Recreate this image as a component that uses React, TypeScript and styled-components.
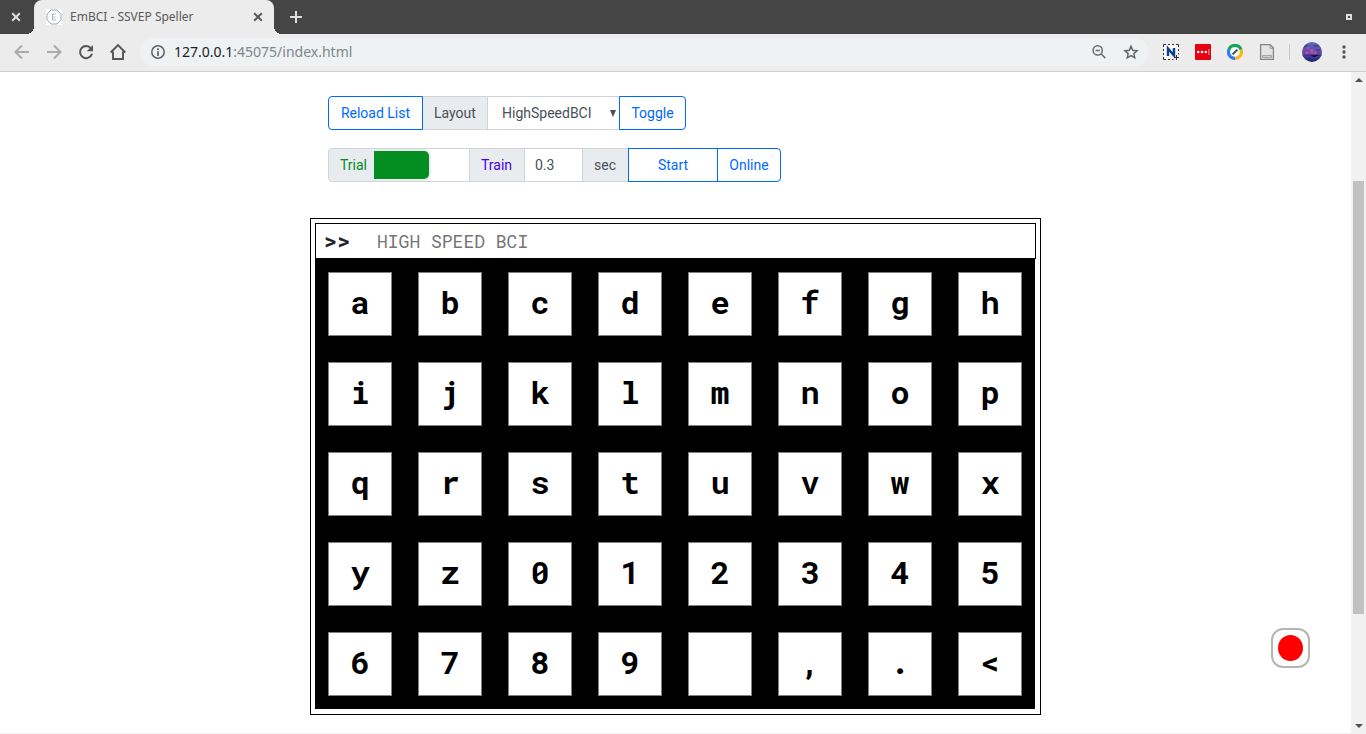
import React from "react";
import styled, { createGlobalStyle } from "styled-components";

const mono = `"Roboto Mono", "Liberation Mono", monospace`;

const GlobalStyle = createGlobalStyle`
  *, *::before, *::after { box-sizing: border-box; }
  html, body, #root { height: 100%; }
  body { margin: 0; background: #fff; font-family: Roboto, "Liberation Sans", sans-serif; font-size: 14px; color: #212529; }
  button, input, select { font: inherit; margin: 0; }
  svg { display: block; flex: none; }
`;

const Window = styled.div`
  display: flex;
  flex-direction: column;
  min-height: 100%;
`;

const TabStrip = styled.header`
  display: flex;
  height: 34px;
  background: #454545;
  font-family: "Noto Sans", sans-serif;
`;

const IconButton = styled.button<{ $w?: number }>`
  display: flex;
  align-items: center;
  justify-content: center;
  flex: none;
  width: ${(p) => p.$w ?? 32}px;
  padding: 0;
  border: 0;
  background: none;
`;

const Tab = styled.div`
  position: relative;
  display: flex;
  align-items: center;
  width: 240px;
  margin-left: 2px;
  padding-left: 12px;
  border-radius: 8px 8px 0 0;
  background: #ececec;
  color: #5a5a5a;
  font-size: 12px;

  &::before, &::after {
    content: "";
    position: absolute;
    bottom: 0;
    width: 8px;
    height: 8px;
  }
  &::before { left: -8px; background: radial-gradient(circle at 0 0, transparent 8px, #ececec 8px); }
  &::after { right: -8px; background: radial-gradient(circle at 100% 0, transparent 8px, #ececec 8px); }
`;

const TabTitle = styled.span`
  flex: 1;
  margin-left: 8px;
  padding-bottom: 2px;
  white-space: nowrap;
`;

const Spacer = styled.div`
  flex: 1;
`;

const Toolbar = styled.nav`
  display: flex;
  align-items: center;
  height: 38px;
  padding: 0 6px 1px;
  border-bottom: 1px solid #cfcfcf;
  background: #ececec;
`;

const AddressBar = styled.div`
  display: flex;
  flex: 1;
  align-items: center;
  height: 28px;
  margin: 0 6px;
  padding: 0 2px 0 10px;
  border-radius: 14px;
  background: #eef2f3;
  font: 14px "Noto Sans", sans-serif;
`;

const Address = styled.a`
  flex: 1;
  margin-left: 8px;
  padding-bottom: 2px;
  color: #80868b;
  text-decoration: none;
`;

const Host = styled.span`
  color: #202124;
`;

const Divider = styled.span`
  width: 1px;
  height: 16px;
  margin: 0 6px;
  background: #c8c8c8;
`;

const Body = styled.div`
  display: flex;
  flex: 1;
  border-bottom: 1px solid #f4f4f4;
`;

const Page = styled.main`
  display: flex;
  flex: 1;
  flex-direction: column;
  align-items: center;
  padding: 24px 16px 18px;
`;

const Content = styled.div`
  width: 100%;
  max-width: 731px;
`;

const Controls = styled.form`
  display: flex;
  flex-direction: column;
  gap: 18px;
  padding: 0 18px;
  margin-bottom: 36px;
`;

const Group = styled.div`
  display: flex;
  height: 34px;

  & > * + * { margin-left: -1px; }
  & > :first-child { border-radius: 4px 0 0 4px; }
  & > :last-child { border-radius: 0 4px 4px 0; }
`;

const OutlineButton = styled.button<{ $w: number }>`
  position: relative;
  width: ${(p) => p.$w}px;
  padding: 0;
  border: 1px solid #0069ff;
  background: #fff;
  color: #0069ff;
`;

const Addon = styled.label<{ $w: number; $color?: string }>`
  display: flex;
  align-items: center;
  width: ${(p) => p.$w}px;
  padding-left: 11px;
  border: 1px solid #ced4da;
  background: #e9ecef;
  color: ${(p) => p.$color ?? "#495057"};
`;

const LayoutSelect = styled.div`
  position: relative;
  display: flex;
  width: 133px;

  select {
    flex: 1;
    width: 100%;
    padding: 0 14px;
    appearance: none;
    border: 1px solid #ced4da;
    border-radius: 0;
    background: #fff;
    color: #495057;
  }
  svg {
    position: absolute;
    right: 4px;
    top: 14px;
    pointer-events: none;
  }
`;

const NumberInput = styled.input`
  width: 59px;
  padding: 0 10px;
  border: 1px solid #ced4da;
  border-radius: 0;
  background: #fff;
  color: #495057;
`;

const SwitchCell = styled.div`
  display: flex;
  align-items: center;
  width: 96px;
  border: 1px solid #ced4da;
  border-left: 0;

  input {
    width: 55px;
    height: 28px;
    appearance: none;
    border-radius: 0 5px 5px 0;
    background: #048d20;
    box-shadow: 0 0 0 2px #e9ecef;
  }
`;

const Speller = styled.section`
  padding: 4px 4px 5px;
  border: 1px solid #000;
`;

const Prompt = styled.label`
  display: flex;
  align-items: center;
  height: 36px;
  padding-left: 8px;
  border: 1px solid #000;
  font-family: ${mono};
`;

const PromptMark = styled.span`
  width: 53px;
  font-size: 22px;
  line-height: 32px;
  font-weight: 700;
`;

const PromptInput = styled.input`
  flex: 1;
  min-width: 0;
  padding: 0;
  border: 0;
  outline: 0;
  background: none;
  font-size: 18px;

  &::placeholder { color: #757575; opacity: 1; }
`;

const Keyboard = styled.div`
  display: grid;
  grid-template-columns: repeat(8, 64px);
  justify-content: space-between;
  gap: 26px 0;
  margin-right: 1px;
  padding: 13px;
  background: #000;
`;

const Key = styled.button`
  height: 64px;
  padding: 0 0 4px;
  border: 1px solid #808080;
  background: #fff;
  color: #000;
  font-family: ${mono};
  font-size: 32px;
  font-weight: 700;
  line-height: 40px;
`;

const RecordButton = styled.button`
  position: fixed;
  right: 56px;
  bottom: 66px;
  display: flex;
  align-items: center;
  justify-content: center;
  width: 39px;
  height: 40px;
  padding: 0;
  border: 2px solid #b5b5b5;
  border-radius: 12px;
  background: #fff;

  &::before {
    content: "";
    width: 25px;
    height: 26px;
    border-radius: 50%;
    background: #f00;
  }
`;

const ScrollBar = styled.div`
  display: flex;
  flex-direction: column;
  align-items: center;
  width: 15px;
  padding: 6px 0 5px;
  background: #f1f1f1;
`;

const ScrollTrack = styled.div`
  display: flex;
  flex: 1;
  flex-direction: column;
  width: 11px;
`;

const TrackPart = styled.div<{ $grow: number; $thumb?: boolean }>`
  flex: ${(p) => p.$grow} 0 0;
  background: ${(p) => (p.$thumb ? "#c1c1c1" : "transparent")};
`;

const dark = "#555";

const Cross = ({ color }: { color: string }) => (
  <svg width="10" height="10" viewBox="0 0 10 10" stroke={color} strokeWidth="2">
    <path d="M1.2 1.2 8.8 8.8M8.8 1.2 1.2 8.8" />
  </svg>
);

const Favicon = () => (
  <svg width="16" height="16" viewBox="0 0 16 16" fill="none">
    <path d="M0 0h16v16H0z" fill="#fff" />
    <path d="M5 1h6l4 4.200v5.600L11 15H5l-4-4.200V5.200z" stroke="#94a5b8" />
    <path d="M10 5H6.500v6H10M6.500 8h3" stroke="#a9b6c6" />
  </svg>
);

const Arrow = ({ flip }: { flip?: boolean }) => (
  <svg width="16" height="16" viewBox="0 0 16 16" fill="none" stroke="#aaa" strokeWidth="2">
    <path d={flip ? "M1 8h13M8 1.500 14.500 8 8 14.500" : "M15 8H2M8 1.500 1.500 8 8 14.500"} />
  </svg>
);

const Reload = () => (
  <svg width="16" height="16" viewBox="0 0 16 16" fill="none">
    <path d="M13 4.300A6.100 6.100 0 1 0 14 9.800" stroke={dark} strokeWidth="2" />
    <path d="M15 1v6.200H8.800z" fill={dark} />
  </svg>
);

const Home = () => (
  <svg width="18" height="18" viewBox="0 0 18 18" fill="none" stroke={dark} strokeWidth="1.900">
    <path d="M1.700 9.500 9 2l7.300 7.500M4 8.500V16h10V8.500" />
  </svg>
);

const Info = () => (
  <svg width="16" height="16" viewBox="0 0 16 16" fill="none" stroke="#5f6368">
    <circle cx="8" cy="8" r="6.200" strokeWidth="1.500" />
    <path d="M8 7.200V12M8 4.300V6" strokeWidth="1.700" />
  </svg>
);

const ZoomOut = () => (
  <svg width="16" height="16" viewBox="0 0 16 16" fill="none" stroke="#6a6e72" strokeWidth="1.500">
    <circle cx="6.700" cy="6.400" r="4.600" />
    <path d="M4.500 6.400h4.400M10 9.800l4.300 4.300" />
  </svg>
);

const Star = () => (
  <svg width="16" height="16" viewBox="0 0 16 16" fill="none" stroke="#5f6368" strokeWidth="1.400">
    <path d="M8 2.200 9.700 6.300l4.400.4-3.300 2.900 1 4.300L8 11.600l-3.800 2.300 1-4.300L1.900 6.700l4.400-.4z" />
  </svg>
);

const Nimbus = () => (
  <svg width="18" height="18" viewBox="0 0 18 18" fill="none">
    <path d="M2 2h14v14H2z" fill="#f8f8f8" />
    <path d="M1.500 4V1.500H4M6 1.500h2M10 1.500h2M14 1.500h2.500V4M16.500 6v2M16.500 10v1.500M1.500 6v2M1.500 10v2M1.500 14v2.500H4M6 16.500h2M10 16.500h1.500" stroke="#333" />
    <path d="M6 13V5.500L12 12.500V5" stroke="#0b3d91" strokeWidth="2.400" />
    <path d="M14.500 12v5M12 14.500h5" stroke="#333" />
  </svg>
);

const LastPass = () => (
  <svg width="16" height="16" viewBox="0 0 16 16">
    <rect width="16" height="16" rx="1" fill="#e60012" />
    <g fill="#fff">
      <circle cx="3.200" cy="8" r="1.300" />
      <circle cx="7" cy="8" r="1.300" />
      <circle cx="10.800" cy="8" r="1.300" />
      <path d="M13.500 5h.8v6h-.8z" opacity=".8" />
    </g>
  </svg>
);

const Ring = () => (
  <svg width="16" height="16" viewBox="0 0 16 16" fill="none" strokeWidth="3.200">
    <circle cx="8" cy="8" r="6" fill="#fff" />
    <path d="M1.900 5.700A6.400 6.400 0 0 1 14 5.700" stroke="#0fa958" />
    <path d="M14 5.700A6.400 6.400 0 0 1 8 14.400" stroke="#fdb813" />
    <path d="M8 14.400A6.400 6.400 0 0 1 1.900 5.700" stroke="#2f7df6" />
    <path d="m5.600 10.400 4.800-4.800" stroke="#444" strokeWidth="2" />
  </svg>
);

const PageIcon = () => (
  <svg width="16" height="16" viewBox="0 0 16 16" fill="none">
    <path d="M1.600.7h9.600l3.200 3.400v11.200H1.600z" fill="#e4e4e4" stroke="#858585" strokeWidth="1.300" />
    <path d="M3.500 11.500h9v2h-9z" fill="#d0d0d0" stroke="#999" strokeWidth=".8" />
    <path d="M11 1v3.300h3" stroke="#999" />
  </svg>
);

const Avatar = () => (
  <svg width="20" height="20" viewBox="0 0 20 20">
    <defs>
      <clipPath id="avatar-clip"><circle cx="10" cy="10" r="10" /></clipPath>
      <linearGradient id="avatar-sky" x1="0" y1="0" x2="0" y2="1">
        <stop offset="0" stopColor="#5969ac" />
        <stop offset=".5" stopColor="#7044a4" />
        <stop offset="1" stopColor="#172268" />
      </linearGradient>
    </defs>
    <g clipPath="url(#avatar-clip)">
      <path d="M0 0h20v20H0z" fill="url(#avatar-sky)" />
      <path d="M2 9h4l2-1h5l2 2-3 2H6z" fill="#8b48ab" />
      <path d="M3 11h3M8 8h3M12 11h3M5 6h2M9 10h2" stroke="#c268c4" />
      <path d="M0 14h8l4 2 8-3M2 5l4-2M12 4h5M14 8h4" stroke="#3442a4" strokeWidth="1.500" />
    </g>
  </svg>
);

const Caret = ({ w, up, color = "#505050" }: { w: number; up?: boolean; color?: string }) => (
  <svg width={w} height={w === 6 ? 7 : 4} viewBox="0 0 8 4" preserveAspectRatio="none">
    <path d={up ? "M0 4 4 0l4 4z" : "M0 0h8L4 4z"} fill={color} />
  </svg>
);

const keys = "abcdefghijklmnopqrstuvwxyz0123456789 ,.<".split("");

export default function App() {
  return (
    <Window>
      <GlobalStyle />
      <TabStrip>
        <IconButton aria-label="Close window"><Cross color="#dedede" /></IconButton>
        <Tab>
          <Favicon />
          <TabTitle>EmBCI - SSVEP Speller</TabTitle>
          <IconButton aria-label="Close tab"><Cross color="#5a5a5a" /></IconButton>
        </Tab>
        <IconButton $w={44} aria-label="New tab">
          <svg width="12" height="12" viewBox="0 0 12 12" stroke="#dedede" strokeWidth="2"><path d="M6 0v12M0 6h12" /></svg>
        </IconButton>
        <Spacer />
        <IconButton $w={34} aria-label="Restore window">
          <svg width="6" height="6" viewBox="0 0 6 6" fill="none" stroke="#dedede" strokeWidth="2"><path d="M1 1h4v4H1z" /></svg>
        </IconButton>
      </TabStrip>

      <Toolbar>
        <IconButton aria-label="Back"><Arrow /></IconButton>
        <IconButton aria-label="Forward"><Arrow flip /></IconButton>
        <IconButton aria-label="Reload"><Reload /></IconButton>
        <IconButton aria-label="Home"><Home /></IconButton>
        <AddressBar>
          <Info />
          <Address href="#"><Host>127.0.0.1</Host>:45075/index.html</Address>
          <IconButton aria-label="Zoom out"><ZoomOut /></IconButton>
          <IconButton aria-label="Bookmark"><Star /></IconButton>
        </AddressBar>
        <IconButton aria-label="Capture"><Nimbus /></IconButton>
        <IconButton aria-label="Passwords"><LastPass /></IconButton>
        <IconButton aria-label="Proxy"><Ring /></IconButton>
        <IconButton aria-label="Page"><PageIcon /></IconButton>
        <Divider />
        <IconButton aria-label="Profile"><Avatar /></IconButton>
        <IconButton aria-label="Menu">
          <svg width="4" height="14" viewBox="0 0 4 14" fill={dark}><circle cx="2" cy="2" r="1.700" /><circle cx="2" cy="7" r="1.700" /><circle cx="2" cy="12" r="1.700" /></svg>
        </IconButton>
      </Toolbar>

      <Body>
        <Page>
          <Content>
            <Controls onSubmit={(e) => e.preventDefault()}>
              <Group>
                <OutlineButton type="button" $w={95}>Reload List</OutlineButton>
                <Addon $w={66} htmlFor="layout">Layout</Addon>
                <LayoutSelect>
                  <select id="layout"><option>HighSpeedBCI</option></select>
                  <Caret w={6} color="#495057" />
                </LayoutSelect>
                <OutlineButton type="button" $w={67}>Toggle</OutlineButton>
              </Group>
              <Group>
                <Addon $w={47} $color="#048d20" htmlFor="mode">Trial</Addon>
                <SwitchCell><input id="mode" type="checkbox" defaultChecked /></SwitchCell>
                <Addon $w={56} $color="#4400ee" htmlFor="duration">Train</Addon>
                <NumberInput id="duration" defaultValue="0.3" />
                <Addon $w={47} htmlFor="duration">sec</Addon>
                <OutlineButton type="button" $w={90}>Start</OutlineButton>
                <OutlineButton type="button" $w={64}>Online</OutlineButton>
              </Group>
            </Controls>
            <Speller>
              <Prompt>
                <PromptMark>&gt;&gt;</PromptMark>
                <PromptInput placeholder="HIGH SPEED BCI" />
              </Prompt>
              <Keyboard>
                {keys.map((k) => (
                  <Key key={k} aria-label={k === " " ? "space" : undefined}>{k}</Key>
                ))}
              </Keyboard>
            </Speller>
          </Content>
        </Page>
        <ScrollBar>
          <Caret w={8} up />
          <ScrollTrack>
            <TrackPart $grow={99} />
            <TrackPart $grow={432} $thumb />
            <TrackPart $grow={110} />
          </ScrollTrack>
          <Caret w={8} />
        </ScrollBar>
      </Body>
      <RecordButton aria-label="Record" />
    </Window>
  );
}
